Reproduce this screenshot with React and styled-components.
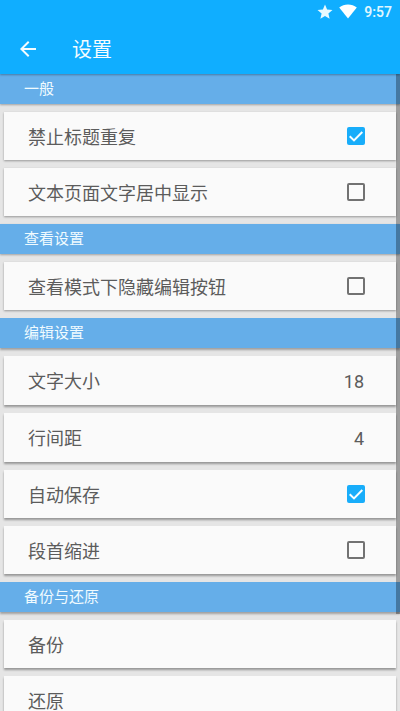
import React from 'react';
import styled, { createGlobalStyle } from 'styled-components';

const GlobalStyle = createGlobalStyle`
  * { box-sizing: border-box; }
  html, body { margin: 0; overflow: hidden; }
  body {
    background: #e5e5e5;
    font-family: Roboto, "Noto Sans CJK SC", sans-serif;
  }
`;

const Screen = styled.div`
  position: relative;
  width: 400px;
  height: 711px;
  overflow: hidden;
  display: flex;
  flex-direction: column;
  background: #e5e5e5;
`;

const Header = styled.header`
  flex: none;
  height: 74px;
  background: #10aeff;
  color: #f4fcff;
  position: relative;
  z-index: 2;
  box-shadow: 0 1px 2px rgba(0, 0, 0, 0.3);
`;

const StatusBar = styled.div`
  height: 24px;
  display: flex;
  align-items: center;
  justify-content: flex-end;
  padding-right: 8px;
`;

const StarIcon = styled.svg`
  width: 18px;
  height: 18px;
  margin-right: 5px;
`;

const WifiIcon = styled.svg`
  width: 18px;
  height: 15px;
  margin: 0 7px 1px 0;
`;

const Clock = styled.span`
  font-size: 14px;
  line-height: 24px;
  font-weight: 600;
  color: #dff6ff;
`;

const Toolbar = styled.div`
  height: 50px;
  display: flex;
  align-items: center;
  padding-left: 16px;
`;

const BackIcon = styled.svg`
  width: 24px;
  height: 24px;
`;

const Title = styled.h1`
  margin: 0 0 0 32px;
  padding-top: 2px;
  font-size: 20px;
  line-height: 48px;
  font-weight: 400;
`;

const List = styled.main`
  display: flex;
  flex-direction: column;
  gap: 8px;
`;

const SectionHeader = styled.h2`
  flex: none;
  height: 30px;
  margin: 0;
  padding-left: 24px;
  background: #65aee9;
  color: #f0fbff;
  font-size: 15px;
  line-height: 30px;
  font-weight: 400;
  box-shadow: 0 ${(p) => p.$depth}px 2px rgba(0, 0, 0, 0.3);
`;

const Row = styled.div`
  flex: none;
  height: ${(p) => (p.$tall ? 49 : 48)}px;
  margin: 0 4px;
  padding: 0 31px 0 24px;
  display: flex;
  align-items: center;
  justify-content: space-between;
  background: #fafafa;
  color: #5c5c5c;
  font-size: 18px;
  box-shadow: 0 ${(p) => p.$depth}px 2px rgba(0, 0, 0, 0.34);
`;

const Label = styled.span`
  line-height: 26px;
  padding-top: ${(p) => (p.$tall ? 2 : 4)}px;
`;

const Value = styled.span`
  line-height: 26px;
  padding-top: 3px;
  margin-right: 1px;
`;

const CheckIcon = styled.svg`
  width: 18px;
  height: 18px;
`;

const Scrollbar = styled.div`
  position: absolute;
  z-index: 1;
  top: 74px;
  right: 0;
  width: 4px;
  height: 540px;
  background: rgba(0, 0, 0, 0.31);
`;

function Checkbox({ checked }) {
  return (
    <CheckIcon viewBox="0 0 18 18" role="checkbox" aria-checked={checked}>
      {checked ? (
        <>
          <rect width="18" height="18" rx="2" fill="#18adfa" />
          <path d="M2.7 9.2 7 13.4 15.3 5" fill="none" stroke="#f7fdff" strokeWidth="2" />
        </>
      ) : (
        <rect x="1" y="1" width="16" height="16" rx="1" fill="none" stroke="#727272" strokeWidth="2" />
      )}
    </CheckIcon>
  );
}

// `depth` is the shadow offset: it grows for cards further down the screen.
const sections = [
  {
    title: '一般',
    depth: 1,
    items: [
      { label: '禁止标题重复', checked: true },
      { label: '文本页面文字居中显示', checked: false },
    ],
  },
  { title: '查看设置', depth: 1, items: [{ label: '查看模式下隐藏编辑按钮', checked: false }] },
  {
    title: '编辑设置',
    depth: 1.5,
    items: [
      { label: '文字大小', value: '18' },
      { label: '行间距', value: '4' },
      { label: '自动保存', checked: true },
      { label: '段首缩进', checked: false },
    ],
  },
  { title: '备份与还原', depth: 2, items: [{ label: '备份' }, { label: '还原' }] },
];

export default function App() {
  return (
    <Screen>
      <GlobalStyle />
      <Header>
        <StatusBar>
          <StarIcon viewBox="0 0 24 24" fill="#e8faff">
            <path d="M12 17.27 18.18 21l-1.64-7.03L22 9.24l-7.19-.61L12 2 9.19 8.63 2 9.24l5.46 4.73L5.82 21z" />
          </StarIcon>
          <WifiIcon viewBox="0 0 18 15" fill="#fff">
            <path d="M9 14.5 0.2 3.6C2.7 1.6 5.7.5 9 .5s6.300 1.100 8.800 3.100z" />
          </WifiIcon>
          <Clock>9:57</Clock>
        </StatusBar>
        <Toolbar>
          <BackIcon viewBox="0 0 24 24" fill="#f4fcff">
            <path d="M20 11H7.830l5.590-5.590L12 4l-8 8 8 8 1.410-1.410L7.830 13H20z" />
          </BackIcon>
          <Title>设置</Title>
        </Toolbar>
      </Header>
      <List>
        {sections.map(({ title, depth, items }) => (
          <React.Fragment key={title}>
            <SectionHeader $depth={depth}>{title}</SectionHeader>
            {items.map(({ label, value, checked }) => (
              <Row key={label} $depth={depth} $tall={value !== undefined}>
                <Label $tall={value !== undefined}>{label}</Label>
                {value !== undefined && <Value>{value}</Value>}
                {checked !== undefined && <Checkbox checked={checked} />}
              </Row>
            ))}
          </React.Fragment>
        ))}
      </List>
      <Scrollbar />
    </Screen>
  );
}
